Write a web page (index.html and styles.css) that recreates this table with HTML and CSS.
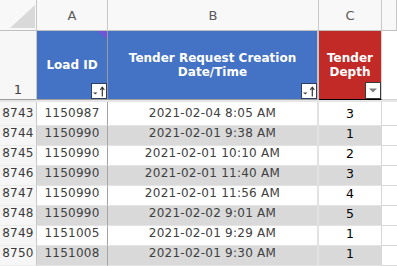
FILE: index.html
```html
<!DOCTYPE html>
<html>
<head>
<meta charset="utf-8">
<link rel="stylesheet" href="styles.css">
</head>
<body>
<div class="sheet">
  <div class="row letters">
    <div class="cell rh corner"><span class="tri"></span></div>
    <div class="cell a">A</div>
    <div class="cell b">B</div>
    <div class="cell c">C</div>
    <div class="cell d"></div>
  </div>
  <div class="row head">
    <div class="cell rh">1</div>
    <div class="cell a blue">Load ID<span class="note"></span><span class="filter"><svg width="14" height="14" viewBox="0 0 14 14"><path d="M1 8.5h4.5l-2.25 2z" fill="#444"/><path d="M10.3 12.5V3.5" stroke="#333" stroke-width="1.2"/><path d="M8.3 5.8l2-2.6 2 2.6" fill="none" stroke="#333" stroke-width="1.1"/></svg></span></div>
    <div class="cell b blue">Tender Request Creation<br>Date/Time<span class="filter"><svg width="14" height="14" viewBox="0 0 14 14"><path d="M1 8.5h4.5l-2.25 2z" fill="#444"/><path d="M10.3 12.5V3.5" stroke="#333" stroke-width="1.2"/><path d="M8.3 5.8l2-2.6 2 2.6" fill="none" stroke="#333" stroke-width="1.1"/></svg></span></div>
    <div class="cell c red">Tender<br>Depth<span class="filter plain"><svg width="14" height="15" viewBox="0 0 14 15"><path d="M3 5.5h8l-4 4z" fill="#7f7f7f"/></svg></span></div>
    <div class="cell d"></div>
  </div>
  <div class="freeze"></div>
  <div class="row data first">
    <div class="cell rh">8743</div><div class="cell a">1150987</div><div class="cell b">2021-02-04 8:05 AM</div><div class="cell c">3</div><div class="cell d"></div>
  </div>
  <div class="row data alt">
    <div class="cell rh">8744</div><div class="cell a">1150990</div><div class="cell b">2021-02-01 9:38 AM</div><div class="cell c">1</div><div class="cell d"></div>
  </div>
  <div class="row data">
    <div class="cell rh">8745</div><div class="cell a">1150990</div><div class="cell b">2021-02-01 10:10 AM</div><div class="cell c">2</div><div class="cell d"></div>
  </div>
  <div class="row data alt">
    <div class="cell rh">8746</div><div class="cell a">1150990</div><div class="cell b">2021-02-01 11:40 AM</div><div class="cell c">3</div><div class="cell d"></div>
  </div>
  <div class="row data">
    <div class="cell rh">8747</div><div class="cell a">1150990</div><div class="cell b">2021-02-01 11:56 AM</div><div class="cell c">4</div><div class="cell d"></div>
  </div>
  <div class="row data alt">
    <div class="cell rh">8748</div><div class="cell a">1150990</div><div class="cell b">2021-02-02 9:01 AM</div><div class="cell c">5</div><div class="cell d"></div>
  </div>
  <div class="row data">
    <div class="cell rh">8749</div><div class="cell a">1151005</div><div class="cell b">2021-02-01 9:29 AM</div><div class="cell c">1</div><div class="cell d"></div>
  </div>
  <div class="row data alt">
    <div class="cell rh">8750</div><div class="cell a">1151008</div><div class="cell b">2021-02-01 9:30 AM</div><div class="cell c">1</div><div class="cell d"></div>
  </div>
</div>
</body>
</html>
```
FILE: styles.css
```css
html, body {
  margin: 0;
  padding: 0;
  background: #ffffff;
}
.sheet {
  width: 397px;
  height: 266px;
  overflow: hidden;
  font-family: "DejaVu Sans", Verdana, sans-serif;
}
.row {
  display: grid;
  grid-template-columns: 37px 71px 211px 63px 1fr;
}
.cell {
  box-sizing: border-box;
  display: flex;
  justify-content: center;
  border-right: 1px solid #d0d0d0;
  white-space: nowrap;
}

/* column letters row */
.letters {
  height: 31px;
  background: #f8f8f8;
}
.letters .cell {
  align-items: center;
  border-bottom: 1px solid #c0c0c0;
  border-right-color: #c8c8c8;
  font-size: 13px;
  color: #5a5a5a;
}
.corner {
  justify-content: flex-end;
  align-items: flex-end !important;
  padding: 0 1px 2px 0;
}
.tri {
  display: block;
  width: 25px;
  height: 23px;
  background: #d9d9d9;
  clip-path: polygon(100% 0, 100% 100%, 0 100%);
}

/* header row 1 */
.head {
  height: 69px;
}
.head .cell {
  position: relative;
  border-bottom: 1px solid #9c9c9c;
  align-items: center;
  text-align: center;
  font-weight: bold;
  font-size: 12px;
  line-height: 14.5px;
  color: #ffffff;
}
.head .rh {
  background: #f7f7f7;
  font-weight: normal;
  font-size: 13px;
  line-height: 15px;
  color: #404040;
  align-items: flex-end;
  padding-bottom: 2px;
  border-right-color: #c8c8c8;
}
.head .a { border-right-color: #9a9a9a; }
.head .b { border-right: 2px solid #c4c4c4; }
.head .c { border-right-color: #d4d4d4; border-bottom-color: #000000; }
.head .d { background: #ffffff; border-bottom-color: #d4d4d4; border-right: none; }
.blue { background: #4472c4; }
.red { background: #c22a28; }
.note {
  position: absolute;
  top: 0;
  right: 0;
  width: 10px;
  height: 8px;
  background: #7055d6;
  clip-path: polygon(0 0, 100% 0, 100% 100%);
}
.filter {
  position: absolute;
  right: 0;
  bottom: 0;
  box-sizing: border-box;
  width: 16px;
  height: 16px;
  background: #ffffff;
  border: 1px solid #2c3e66;
  display: flex;
}
.filter.plain {
  height: 17px;
  border-color: #3a3a3a;
}

.freeze {
  height: 2px;
  background: #e6e6e6;
}

/* data rows */
.data {
  height: 20px;
}
.data.first {
  height: 24px;
}
.data .cell {
  align-items: flex-end;
  padding-bottom: 4px;
  line-height: 15px;
  font-size: 12px;
  letter-spacing: 0.25px;
  color: #404040;
  border-bottom: 1px solid #e4e4e4;
}
.data .rh {
  background: #f6f6f6;
  color: #3a3a3a;
  border-right-color: #c8c8c8;
  border-bottom-color: #ececec;
}
.data .a { border-right-color: #a3a3a3; }
.data .b { border-right: 2px solid #e2e2e2; }
.data .c {
  color: #000000;
  font-size: 12.5px;
  letter-spacing: 0;
  border-right-color: #d6d6d6;
}
.data .d {
  border-right: none;
  border-bottom-color: #d8d8d8;
}
.alt .a, .alt .b, .alt .c {
  background: #d9d9d9;
}
```
